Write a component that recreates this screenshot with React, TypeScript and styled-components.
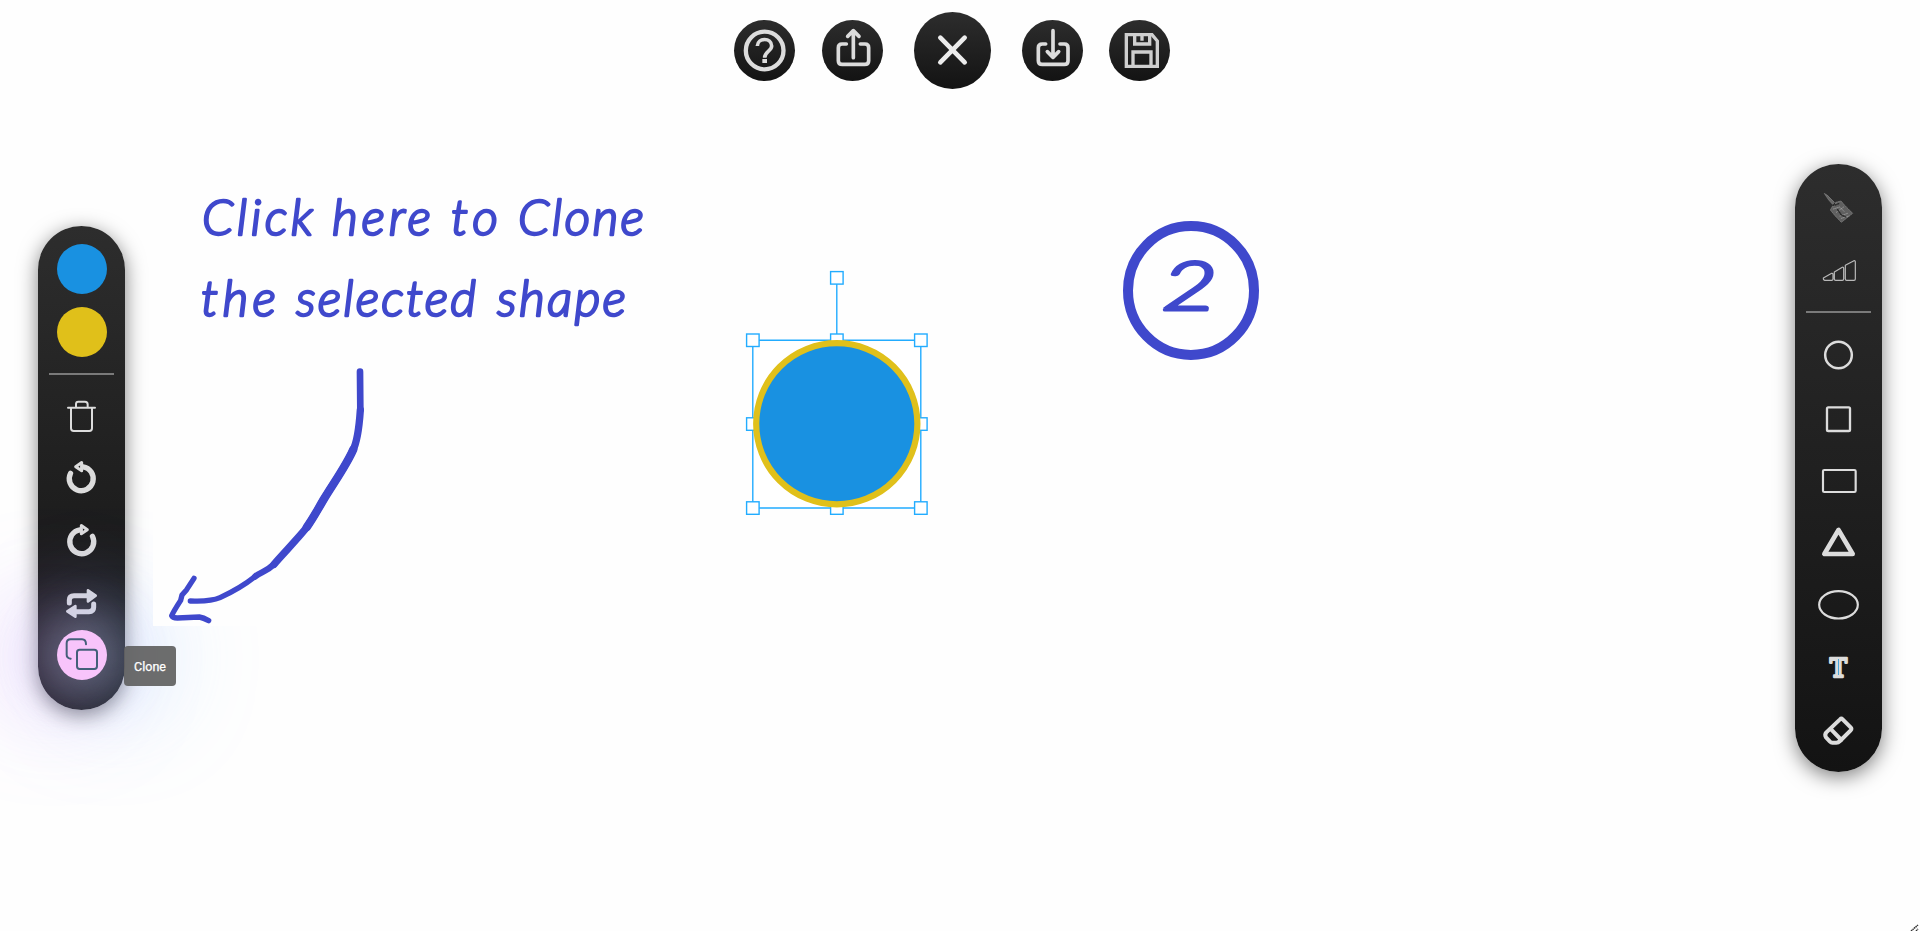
import React from 'react';
import styled, { createGlobalStyle } from 'styled-components';

const GlobalStyle = createGlobalStyle`
  * { box-sizing: border-box; }
  html, body { margin: 0; padding: 0; background: #fff; overflow: hidden; }
  body { font-family: Roboto, "Liberation Sans", sans-serif; }
`;

const Page = styled.div`
  position: relative;
  width: 1920px;
  height: 931px;
  overflow: hidden;
  background: #fefefe;
`;

const TopBar = styled.header`
  display: flex;
  align-items: center;
  justify-content: center;
  height: 101px;
  padding-right: 16px;
  gap: 31px;
`;

const ButtonPair = styled.div<{ $gap: number }>`
  display: flex;
  gap: ${p => p.$gap}px;
`;

const RoundButton = styled.button<{ $size: number }>`
  width: ${p => p.$size}px;
  height: ${p => p.$size}px;
  padding: 0;
  border: 0;
  border-radius: 50%;
  background: linear-gradient(#2d2d2d, #131313);
`;

const Workspace = styled.main`
  display: flex;
  justify-content: space-between;
  align-items: flex-start;
  padding: 0 38px;
`;

const Panel = styled.aside<{ $top: number; $height: number; $inset: number }>`
  display: flex;
  flex-direction: column;
  align-items: flex-start;
  width: 87px;
  height: ${p => p.$height}px;
  margin-top: ${p => p.$top}px;
  padding: 18px 0 0 ${p => p.$inset}px;
  border-radius: 43.5px;
  background: linear-gradient(#2d2d2d, #131313);
  box-shadow: 0 5px 20px rgba(0, 0, 0, 0.5);
`;

const Slot = styled.div<{ $before?: number }>`
  width: 50px;
  height: 50px;
  flex: none;
  margin-top: ${p => p.$before ?? 0}px;
`;

const Swatch = styled(Slot)<{ $color: string }>`
  border-radius: 50%;
  background: ${p => p.$color};
`;

const Rule = styled.div<{ $shift: number }>`
  width: 65px;
  height: 2px;
  flex: none;
  margin: 16px 0 0 ${p => p.$shift}px;
  background: #7a7a7a;
`;

const CloneButton = styled(Slot)`
  position: relative;
  border-radius: 50%;
  background: #f8c4fb;
  box-shadow:
    0 0 56px 10px rgba(225, 232, 255, 0.42),
    -28px 2px 100px 24px rgba(205, 130, 250, 0.36),
    28px 2px 100px 24px rgba(120, 190, 255, 0.38);
`;

const Tooltip = styled.div`
  position: absolute;
  left: 67px;
  top: 16px;
  display: flex;
  align-items: center;
  justify-content: center;
  width: 52px;
  height: 40px;
  padding-top: 1px;
  border-radius: 4px;
  background: rgba(97, 97, 97, 0.92);
  color: #fff;
  font: 400 12.5px Roboto, sans-serif;
  -webkit-text-stroke: 0.25px #fff;
`;

const Glyph = styled.svg<{ $width?: number; $tint?: string }>`
  display: block;
  width: 100%;
  height: 100%;
  fill: none;
  stroke: ${p => p.$tint ?? '#dcdcdc'};
  stroke-width: ${p => p.$width ?? 5};
  stroke-linecap: round;
  stroke-linejoin: round;
`;

const Board = styled.svg`
  position: absolute;
  inset: 0;
  width: 1920px;
  height: 931px;
  pointer-events: none;
`;

const Handwriting = styled.text<{ $size?: number; $pen?: number }>`
  font-family: Lato, sans-serif;
  font-style: italic;
  font-weight: 300;
  font-size: ${p => p.$size ?? 50}px;
  fill: #3f48cc;
  stroke: #3f48cc;
  stroke-width: ${p => p.$pen ?? 2.4};
  stroke-linejoin: round;
  stroke-linecap: round;
`;

const words: [string, number, number, number][] = [
  ['Click', 202, 235, 111],
  ['here', 332, 235, 99],
  ['to', 451, 235, 47],
  ['Clone', 518, 235, 126],
  ['the', 201, 315.5, 75],
  ['selected', 296, 315.5, 180],
  ['shape', 497, 315.5, 129],
];

const handles: [number, number][] = [
  [752.8, 340.2], [836.8, 340.2], [920.8, 340.2],
  [752.8, 424], [920.8, 424],
  [752.8, 508], [836.8, 508], [920.8, 508],
  [836.8, 277.8],
];

const UndoShape = () => (
  <>
    <path d="M211.500 70A36 36 0 1 0 249 50.500" strokeWidth="16" />
    <path d="M227 50L245 37.500V62Z" strokeWidth="9" />
  </>
);

export default function App() {
  return (
    <Page>
      <GlobalStyle />
      <TopBar>
        <ButtonPair $gap={27}>
          <RoundButton $size={61} aria-label="Help">
            <Glyph viewBox="42 60 183 183" $width={11}>
              <circle cx="134" cy="151.500" r="56.500" strokeWidth="13" />
              <path d="M112 138C113 112 155 112 155 138C155 153 134 154 134 173" strokeLinecap="butt" />
              <path d="M134 177V189" strokeWidth="14" strokeLinecap="butt" />
            </Glyph>
          </RoundButton>
          <RoundButton $size={61} aria-label="Share">
            <Glyph viewBox="306 60 183 183" $width={11}>
              <path d="M379 132H366Q355 132 355 143V182Q355 193 367 193H434Q446 193 446 182V143Q446 132 435 132H421M400 92V173M383 109L400 92L417 109" />
            </Glyph>
          </RoundButton>
        </ButtonPair>
        <RoundButton $size={77} aria-label="Close">
          <Glyph viewBox="583 37 231 231" $width={14} $tint="#ececec">
            <path d="M662 114L735 188M735 114L662 188" />
          </Glyph>
        </RoundButton>
        <ButtonPair $gap={26}>
          <RoundButton $size={61} aria-label="Download">
            <Glyph viewBox="247 60 183 183" $width={11}>
              <path d="M318 132H308Q296 132 296 143V182Q296 193 308 193H374Q385 193 385 182V143Q385 132 374 132H361M340 92V172M323 155L340 172L357 155" />
            </Glyph>
          </RoundButton>
          <RoundButton $size={61} aria-label="Save">
            <Glyph viewBox="507 60 183 183" $width={10} $tint="#cfcfcf">
              <g strokeLinejoin="miter" strokeLinecap="butt">
                <path d="M559 104H636L652 123V199H559Z" />
                <path d="M584 104V132H629V104M606 106V122M579 199V156H633V199" />
              </g>
            </Glyph>
          </RoundButton>
        </ButtonPair>
      </TopBar>

      <Workspace>
        <Panel $top={125} $height={484} $inset={19}>
          <Swatch $color="#1991e1" />
          <Swatch $before={13} $color="#e0c01a" />
          <Rule $shift={-8} />
          <Slot $before={16}>
            <Glyph viewBox="171 543 150 150" $width={6}>
              <path d="M228 592V582Q228 575 235 575H255Q263 575 263 583V592M204 593H285M213 595V655Q213 663 221 663H268Q276 663 276 655V595" />
            </Glyph>
          </Slot>
          <Slot $before={12}>
            <Glyph viewBox="171 9 150 150"><UndoShape /></Glyph>
          </Slot>
          <Slot $before={13}>
            <Glyph viewBox="171 198 150 150">
              <g transform="translate(489 189) scale(-1 1)"><UndoShape /></g>
            </Glyph>
          </Slot>
          <Slot $before={12}>
            <Glyph viewBox="171 384 150 150" $width={15}>
              <path d="M208 459V450Q208 437 222 437H262M281 462V472Q281 485 267 485H228" />
              <path d="M264 421L287 437L264 454ZM226 468L202 484L226 500Z" strokeWidth="8" fill="#dcdcdc" />
            </Glyph>
          </Slot>
          <CloneButton $before={2}>
            <Glyph viewBox="171 540 150 150" $width={6} $tint="#445f79">
              <path d="M212 626Q200 624 200 614V580Q200 568 212 568H246Q258 568 258 583" />
              <rect x="231" y="599" width="60" height="58" rx="8" />
            </Glyph>
            <Tooltip>Clone</Tooltip>
          </CloneButton>
        </Panel>

        <Panel $top={63} $height={608} $inset={18}>
          <Slot>
            <Glyph viewBox="99 96 150 150" $width={2} $tint="#8a8a8a">
              <path d="M134 131L142 136L163 157L158 163L147 151Z" fill="#666" />
              <path d="M168 157L183 153L194 166L218 190L184 217L165 197L151 180L158 168L162 171Z" fill="#606060" strokeDasharray="4 3" />
              <path d="M160 177L179 171L192 184M169 187L191 171M180 198L203 190M184 205L207 198" stroke="#aaa" strokeDasharray="3 3" />
              <path d="M165 165L180 160M173 179L184 195L197 201" stroke="#272727" strokeWidth="4" strokeDasharray="4 4" />
            </Glyph>
          </Slot>
          <Slot $before={13}>
            <Glyph viewBox="99 285 150 150" $width={3.6} $tint="#b8b8b8">
              <path d="M130 384L155 370Q159 369 159 374V388Q159 391 155 391H134Q129 390 130 384ZM163 366L187 352Q191 350 191 356V387Q191 391 187 391H167Q163 391 163 387ZM196 346L222 332Q226 331 226 337V387Q226 391 222 391H200Q196 391 196 387Z" />
            </Glyph>
          </Slot>
          <Rule $shift={-7} />
          <Slot $before={17}>
            <Glyph viewBox="99 540 150 150" $width={7.5}><circle cx="175.500" cy="615" r="40" /></Glyph>
          </Slot>
          <Slot $before={14}>
            <Glyph viewBox="99 732 150 150" $width={7}><rect x="141" y="772" width="69" height="71" rx="4" /></Glyph>
          </Slot>
          <Slot $before={12}>
            <Glyph viewBox="99 48 150 150" $width={6.5}><rect x="129" y="90" width="98" height="66" rx="4" /></Glyph>
          </Slot>
          <Slot $before={11}>
            <Glyph viewBox="99 231 150 150" $width={14}><path d="M175.500 270L133 342H218Z" /></Glyph>
          </Slot>
          <Slot $before={13}>
            <Glyph viewBox="99 420 150 150" $width={6.5}><ellipse cx="175.500" cy="494.500" rx="58" ry="41" /></Glyph>
          </Slot>
          <Slot $before={12}>
            <Glyph viewBox="99 606 150 150" $width={7}>
              <text x="149.500" y="710" fontSize="79" fontWeight="700" fontFamily="DejaVu Serif, serif" fill="#dcdcdc" textLength="52" lengthAdjust="spacingAndGlyphs">T</text>
              <path d="M175.500 657V705" stroke="#4aa5da" strokeWidth="3" strokeLinecap="butt" />
            </Glyph>
          </Slot>
          <Slot $before={14}>
            <Glyph viewBox="99 798 150 150" $width={12}>
              <path d="M180 838Q184 834 188 838L212 862Q216 866 212 871L180 903Q175 908 169 908H157Q153 908 150 905L138 892Q133 884 139 877ZM154 869L184 900" />
            </Glyph>
          </Slot>
        </Panel>
      </Workspace>

      <Board viewBox="0 0 1920 931">
        <rect x="153" y="180" width="520" height="446" fill="#fefefe" />
        {words.map(([word, x, y, width]) => (
          <Handwriting key={word} x={x} y={y} textLength={width} lengthAdjust="spacing">{word}</Handwriting>
        ))}
        <g transform="translate(150 350) scale(.33333)" fill="none" stroke="#3f48cc" strokeLinecap="round" strokeLinejoin="round">
          <path strokeWidth="20" d="M630 65L631 180" />
          <path strokeWidth="22" d="M631 180C627 240 619 282 608 302C590 345 550 400 520 450C495 493 488 507 468 535C440 570 400 610 372 643" />
          <path strokeWidth="19" d="M372 643C350 665 332 666 315 680" />
          <path strokeWidth="16" d="M315 680C280 708 245 727 210 743C180 756 150 753 121 753" />
          <path strokeWidth="25" d="M610 298C590 345 550 400 520 450C495 493 488 507 470 532" />
          <path strokeWidth="16" d="M132 685L110 719L96 735L92 751Q70 785 65 797Q68 804 82 804L148 801Q160 803 176 812" />
        </g>
        <g fill="#fff" stroke="#22acff" strokeWidth="1.400">
          <path d="M836.800 277.800V340.200M752.800 340.200H920.800V508H752.800Z" />
          {handles.map(([x, y]) => (
            <rect key={`${x}-${y}`} x={x - 6.2} y={y - 6.2} width="12.500" height="12.500" />
          ))}
        </g>
        <circle cx="836.800" cy="423.800" r="80.600" fill="#1991e1" stroke="#e0c01a" strokeWidth="6.200" />
        <ellipse cx="1191" cy="290.500" rx="63" ry="64.500" fill="none" stroke="#3f48cc" strokeWidth="10" />
        <Handwriting x="1161" y="309.500" $size={68} $pen={3} textLength="57" lengthAdjust="spacingAndGlyphs">2</Handwriting>
        <path d="M1911 931L1918 925M1916 931L1918 929" stroke="#333" strokeWidth="1.500" strokeDasharray="1.500 .5" />
      </Board>
    </Page>
  );
}
